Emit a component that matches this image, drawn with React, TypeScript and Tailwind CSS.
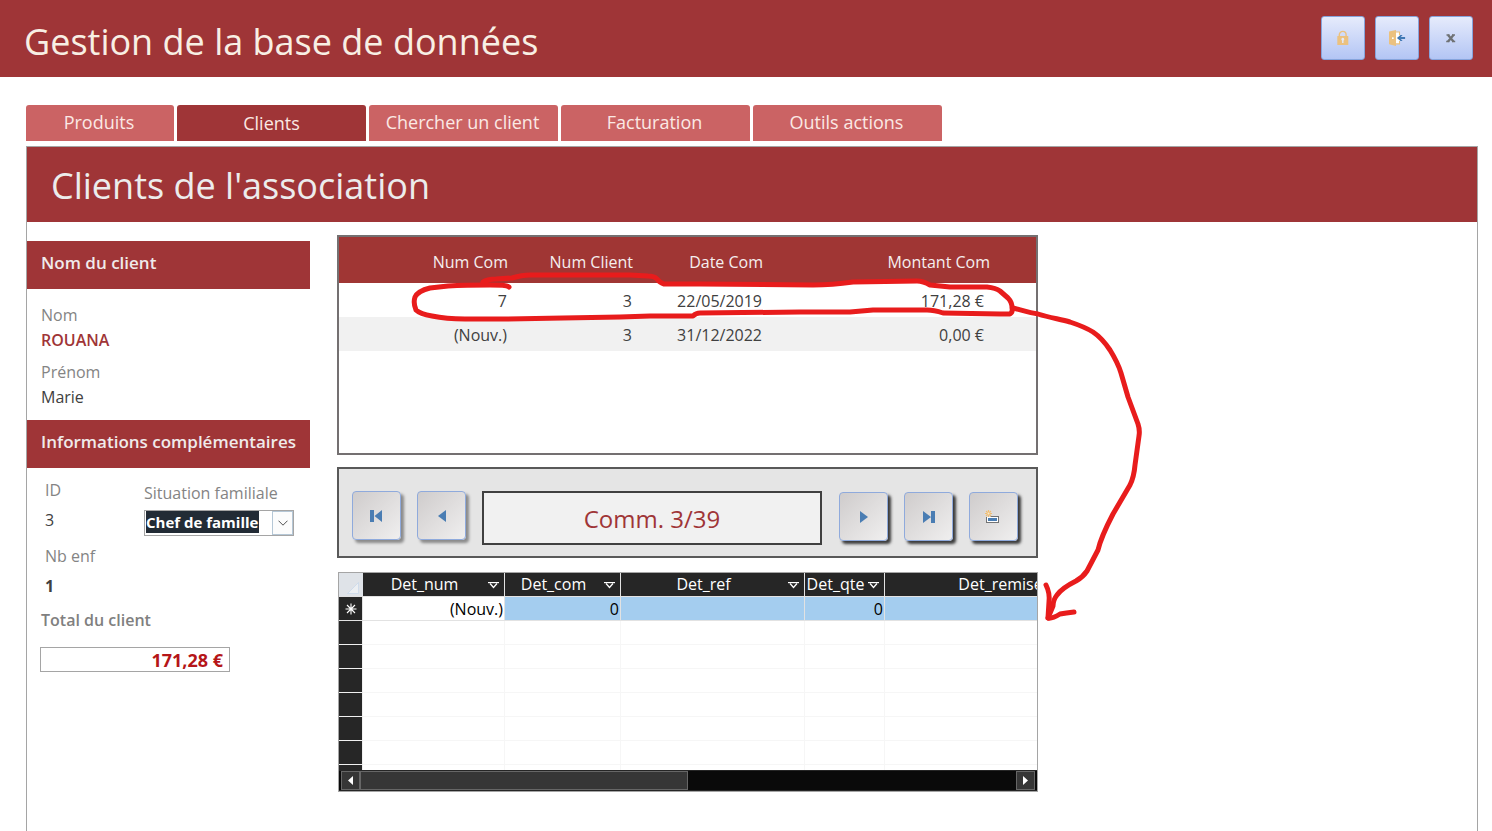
import React from "react";

const TABS = [
  { label: "Produits", active: false, width: "w-[148px]" },
  { label: "Clients", active: true, width: "w-[189px]" },
  { label: "Chercher un client", active: false, width: "w-[189px]" },
  { label: "Facturation", active: false, width: "w-[189px]" },
  { label: "Outils actions", active: false, width: "w-[189px]" },
];

const ORDERS = [
  { num: "7", client: "3", date: "22/05/2019", amount: "171,28 €" },
  { num: "(Nouv.)", client: "3", date: "31/12/2022", amount: "0,00 €" },
];

const DETAIL_COLUMNS = ["Det_num", "Det_com", "Det_ref", "Det_qte", "Det_remise"];

function LockIcon() {
  return (
    <svg width="12" height="16" viewBox="0 0 12 16" aria-hidden="true">
      <path d="M2.3 7V4.8a3.4 3.4 0 0 1 6.8 0V7" fill="none" stroke="#ebc17f" strokeWidth="1.4" />
      <rect x="0.3" y="6" width="11" height="9" rx="0.6" fill="#ebc17f" />
      <path d="M5.8 7.8a1.5 1.5 0 0 1 .7 2.8V13H5.1v-2.4a1.5 1.5 0 0 1 .7-2.8z" fill="#e4eafb" />
    </svg>
  );
}

function ExitIcon() {
  return (
    <svg width="17" height="16" viewBox="0 0 17 16" aria-hidden="true">
      <path d="M6.5 2H11v12H6.5z" fill="#fff" />
      <path d="M6.5 2h4v3.2M10.5 11v2.9h-4" fill="none" stroke="#ebc17f" strokeWidth="1.1" />
      <path d="M0 1.6L7 0.1v15.8L0 14.2z" fill="#ebc17f" />
      <rect x="3" y="7.2" width="1.7" height="1.7" rx="0.5" fill="#fff" />
      <path d="M7.9 8L11.5 4.9h2.1L11.8 7h4.3v2.1h-4.3l1.8 2h-2.1z" fill="#4179b4" />
    </svg>
  );
}

function CloseIcon() {
  return (
    <svg width="10" height="9" viewBox="0 0 10 9" aria-hidden="true">
      <path d="M0.5 1h3M6 1h3M0.2 7.5h3.2M6 7.5h3.2" stroke="#6f7275" strokeWidth="1.5" />
      <path d="M2 1l5.5 6.5M7.5 1L2 7.5" stroke="#6f7275" strokeWidth="2.3" />
    </svg>
  );
}

function FirstIcon() {
  return (
    <svg width="13" height="12" viewBox="0 0 13 12" aria-hidden="true">
      <path d="M0 0h4v12H0zM12 0v12L4.5 6z" fill="#4a7db3" />
    </svg>
  );
}

function PreviousIcon() {
  return (
    <svg width="8" height="12" viewBox="0 0 8 12" aria-hidden="true">
      <path d="M8 0v12L0 6z" fill="#4a7db3" />
    </svg>
  );
}

function NextIcon() {
  return (
    <svg width="8" height="12" viewBox="0 0 8 12" aria-hidden="true">
      <path d="M0 0v12l8-6z" fill="#4a7db3" />
    </svg>
  );
}

function LastIcon() {
  return (
    <svg width="12" height="12" viewBox="0 0 12 12" aria-hidden="true">
      <path d="M0 0v12l8-6zM8 0h4v12H8z" fill="#4a7db3" />
    </svg>
  );
}

function NewRecordIcon() {
  return (
    <svg className="mr-0.5" width="15" height="13" viewBox="0 0 15 13" aria-hidden="true">
      <rect x="1.5" y="6.5" width="12" height="6" fill="#fff" stroke="#737373" />
      <rect x="3" y="8" width="9" height="3" fill="#4a7db3" />
      <path d="M0 0h7v5.5L5 7H0z" fill="#dedbdb" />
      <path d="M3.5 0v7M0 3.5h7M1 1l5 5M6 1L1 6" stroke="#efbd72" strokeWidth="1.1" />
      <circle cx="3.5" cy="3.5" r="1.4" fill="#fbe9cb" stroke="#efbd72" strokeWidth="0.9" />
    </svg>
  );
}

function ColumnArrow() {
  return (
    <svg className="mt-0.5 shrink-0" width="11" height="7" viewBox="0 0 11 7" aria-hidden="true">
      <path d="M0 0.6h11" stroke="#fff" strokeWidth="1.2" />
      <path d="M2 1.5L5.5 5.5 9 1.5" fill="none" stroke="#fff" strokeWidth="1.2" />
    </svg>
  );
}

function HeaderButton({ label, children }: { label: string; children: React.ReactNode }) {
  return (
    <button
      type="button"
      aria-label={label}
      className="flex size-11 items-center justify-center rounded-[3px] border border-[#86a4dc] bg-linear-to-b from-[#e6ebfc] to-[#b3c5f4]"
    >
      {children}
    </button>
  );
}

function NavButton({ label, strong, children }: { label: string; strong?: boolean; children: React.ReactNode }) {
  return (
    <button
      type="button"
      aria-label={label}
      className={
        "flex size-[49px] shrink-0 items-center justify-center rounded-[4px] border border-[#8faadc] bg-linear-to-br from-[#cfcccc] to-[#f0efef] " +
        (strong ? "shadow-[3px_3px_3px_rgba(0,0,0,0.75)]" : "shadow-[3px_3px_3px_rgba(0,0,0,0.4)]")
      }
    >
      {children}
    </button>
  );
}

function SectionTitle({ children }: { children: React.ReactNode }) {
  return (
    <h3 className="flex h-12 items-center bg-[#9f3537] px-3.5 pb-1 text-[17px] font-semibold whitespace-nowrap text-[#f0eaea]">
      {children}
    </h3>
  );
}

function ClientSidebar() {
  return (
    <aside className="w-[283px] shrink-0 pt-[19px] text-base leading-6 text-[#404040]">
      <SectionTitle>Nom du client</SectionTitle>
      <div className="flex flex-col gap-2 px-3.5 pt-3.5 pb-[11px]">
        <div className="flex flex-col gap-px">
          <label htmlFor="nom" className="text-[#848484]">Nom</label>
          <input id="nom" defaultValue="ROUANA" className="h-6 w-full font-semibold text-[#9f3537]" />
        </div>
        <div className="flex flex-col gap-px">
          <label htmlFor="prenom" className="text-[#848484]">Prénom</label>
          <input id="prenom" defaultValue="Marie" className="h-6 w-full" />
        </div>
      </div>
      <SectionTitle>Informations complémentaires</SectionTitle>
      <div className="flex pt-2.5 pl-[18px]">
        <div className="flex w-[99px] flex-col gap-3">
          <div className="flex flex-col gap-1.5">
            <label htmlFor="client-id" className="text-[#848484]">ID</label>
            <input id="client-id" defaultValue="3" className="h-6 w-full" />
          </div>
          <div className="flex flex-col gap-1.5">
            <label htmlFor="enfants" className="text-[#848484]">Nb enf</label>
            <input id="enfants" defaultValue="1" className="h-6 w-full font-bold" />
          </div>
        </div>
        <div className="flex flex-col gap-[5px] pt-[3px]">
          <label htmlFor="situation" className="text-[#848484]">Situation familiale</label>
          <div className="flex h-[26px] w-[150px] justify-between border border-[#a5a5a5] bg-white">
            <select
              id="situation"
              className="ml-px h-[22px] w-[113px] appearance-none bg-[#222b35] text-[15px] leading-[22px] font-bold text-white"
            >
              <option>Chef de famille</option>
            </select>
            <button
              type="button"
              aria-label="Ouvrir la liste"
              className="flex w-[21px] items-center justify-center border border-[#b5c7d6] bg-[#fcfcfc]"
            >
              <svg width="10" height="6" viewBox="0 0 10 6" aria-hidden="true">
                <path d="M0.5 0.7L5 5.2l4.5-4.5" fill="none" stroke="#505050" />
              </svg>
            </button>
          </div>
        </div>
      </div>
      <div className="flex flex-col gap-[15px] px-[13px] pt-2.5">
        <label htmlFor="total" className="pl-px font-semibold text-[#808080]">Total du client</label>
        <input
          id="total"
          readOnly
          defaultValue="171,28 €"
          className="h-[25px] w-[190px] border border-[#a5a5a5] pr-1.5 text-right text-lg leading-[23px] font-bold text-[#b51518]"
        />
      </div>
    </aside>
  );
}

function OrdersTable() {
  return (
    <div className="h-[220px] overflow-hidden border-2 border-[#747071] bg-white">
      <table className="w-full table-fixed border-collapse text-right text-base text-[#404040]">
        <colgroup>
          <col className="w-[169px]" />
          <col className="w-[125px]" />
          <col className="w-[130px]" />
          <col />
          <col className="w-[46px]" />
        </colgroup>
        <thead>
          <tr className="h-[46px] bg-[#a03634] text-[#f5eeee]">
            <th className="pt-1 font-normal">Num Com</th>
            <th className="pt-1 font-normal">Num Client</th>
            <th className="pt-1 font-normal">Date Com</th>
            <th className="pt-1 font-normal">Montant Com</th>
            <td />
          </tr>
        </thead>
        <tbody>
          {ORDERS.map((order) => (
            <tr key={order.num} className="h-[34px] even:bg-[#f1f1f1]">
              <td className="pt-0.5 pr-px">{order.num}</td>
              <td className="pt-0.5 pr-px">{order.client}</td>
              <td className="pt-0.5 pr-px">{order.date}</td>
              <td className="pt-0.5 pr-1.5">{order.amount}</td>
              <td />
            </tr>
          ))}
        </tbody>
      </table>
    </div>
  );
}

function RecordNavigator() {
  return (
    <div className="mt-3 flex h-[91px] items-start border-2 border-[#595959] bg-[#e5e5e5] pt-[22px] pr-[18px] pl-[13px]">
      <div className="flex gap-4">
        <NavButton label="Premier"><FirstIcon /></NavButton>
        <NavButton label="Précédent"><PreviousIcon /></NavButton>
      </div>
      <output className="mr-[17px] ml-4 flex h-[54px] min-w-0 flex-1 items-center justify-center border-2 border-[#404040] bg-[#f1f1f1] pt-0.5 text-2xl text-[#9f3537]">
        Comm. 3/39
      </output>
      <div className="flex gap-4 pt-px">
        <NavButton label="Suivant" strong><NextIcon /></NavButton>
        <NavButton label="Dernier" strong><LastIcon /></NavButton>
        <NavButton label="Nouveau" strong><NewRecordIcon /></NavButton>
      </div>
    </div>
  );
}

function DetailSheet() {
  return (
    <div className="mt-3.5 ml-px flex h-[220px] flex-col border border-[#a5a5a5] bg-white">
      <div className="min-h-0 flex-1 overflow-hidden">
        <table className="w-[796px] table-fixed border-separate border-spacing-0 text-base leading-[22px] text-black">
          <colgroup>
            <col className="w-6" />
            <col className="w-[142px]" />
            <col className="w-[116px]" />
            <col className="w-[184px]" />
            <col className="w-20" />
            <col className="w-[250px]" />
          </colgroup>
          <thead>
            <tr className="h-6 bg-[#262626] text-white">
              <td className="border-b border-[#e2e2e2] bg-[#dfe3e8] p-0 align-bottom">
                <svg className="mr-1 mb-0.5 ml-auto" width="12" height="12" viewBox="0 0 12 12" aria-hidden="true">
                  <path d="M0.5 11.5L11.5 0.5v11z" fill="#eceff2" stroke="#c5d7ea" strokeWidth="0.7" />
                </svg>
              </td>
              {DETAIL_COLUMNS.map((name) => (
                <th key={name} className="border-r border-b border-[#e2e2e2] p-0 pb-px font-normal">
                  <div className="flex items-center gap-0.5 pr-[5px]">
                    <span className="min-w-0 flex-1 overflow-hidden">{name}</span>
                    <ColumnArrow />
                  </div>
                </th>
              ))}
            </tr>
          </thead>
          <tbody>
            <tr className="h-6 bg-[#a4cdef] text-right">
              <td className="border-r border-b border-[#e2e2e2] bg-[#262626] p-0">
                <svg className="mx-auto" width="12" height="12" viewBox="0 0 12 12" aria-hidden="true">
                  <path d="M6 0.5v11M0.5 6h11M2 2l8 8M10 2l-8 8" stroke="#fff" strokeWidth="1.1" />
                </svg>
              </td>
              <td className="border-r border-b border-[#e2e2e2] bg-white p-0 pr-px">(Nouv.)</td>
              <td className="border-r border-b border-[#e2e2e2] p-0 pr-px">0</td>
              <td className="border-r border-b border-[#e2e2e2] p-0" />
              <td className="border-r border-b border-[#e2e2e2] p-0 pr-px">0</td>
              <td className="border-b border-[#e2e2e2] p-0" />
            </tr>
            {[0, 1, 2, 3, 4, 5, 6].map((row) => (
              <tr key={row} className="h-6">
                <td className="border-r border-b border-[#f0f0f0] bg-[#262626] p-0" />
                {DETAIL_COLUMNS.map((name) => (
                  <td key={name} className="border-r border-b border-[#f6f6f6] p-0" />
                ))}
              </tr>
            ))}
          </tbody>
        </table>
      </div>
      <div className="flex h-[21px] shrink-0 border-y border-[#262626] bg-[#0a0a0a]">
        <button type="button" aria-label="Défiler à gauche" className="ml-0.5 flex w-[19px] items-center justify-center border border-[#666] bg-[#363636]">
          <svg width="5" height="9" viewBox="0 0 5 9" aria-hidden="true"><path d="M5 0v9L0 4.5z" fill="#fff" /></svg>
        </button>
        <div className="w-[328px] border border-[#666] bg-[#363636]" />
        <button type="button" aria-label="Défiler à droite" className="mr-0.5 ml-auto flex w-[19px] items-center justify-center border border-[#666] bg-[#363636]">
          <svg width="5" height="9" viewBox="0 0 5 9" aria-hidden="true"><path d="M0 0v9l5-4.5z" fill="#fff" /></svg>
        </button>
      </div>
    </div>
  );
}

function InkAnnotation() {
  return (
    <svg
      className="pointer-events-none absolute top-0 left-0"
      width="820"
      height="400"
      viewBox="337 235 820 400"
      fill="none"
      stroke="#e81c1c"
      strokeWidth="5"
      strokeLinecap="round"
      strokeLinejoin="round"
      aria-hidden="true"
    >
      <path d="M509 287C507 285 500 285 490 285Q465 285 448 286L430 288Q418 291 415 297Q413 303 416 310Q420 314 432 316Q446 319 465 319H507L563 318L620 317L650 316H693Q696 313 700 313L800 312L850 312L873 310H927Q934 310 943 313L1000 314H1010Q1013 312 1012 308Q1012 302 1008 298L1000 291Q996 288 987 287L950 287L930 285Q923 281 917 281L853 282Q832 285 813 285L700 284H664Q660 283 657 279Q654 276 648 276L630 275H530Q522 275 512 278L496 279Q487 279 483 282" />
      <path d="M1013 308C1021 310 1030 313 1038 314C1050 318 1060 319 1070 322Q1085 327 1093 332Q1102 338 1110 350Q1118 363 1121 373L1128 397L1138 424Q1140 430 1139 436L1135 465Q1134 477 1130 485L1113 514Q1101 537 1098 550L1087 571Q1083 577 1076 581Q1062 588 1057 595Q1053 600 1053 606L1048 618" />
      <path d="M1046 585Q1050 593 1049 602L1048 618Q1052 619 1060 614Q1066 613 1074 612" />
    </svg>
  );
}

export default function App() {
  return (
    <div className="flex min-h-screen flex-col bg-white font-['Open_Sans','Noto_Sans',sans-serif]">
      <header className="flex h-[77px] shrink-0 items-center justify-between bg-[#9f3537] pr-[19px] pb-px pl-6">
        <h1 className="pt-2 text-4xl font-normal text-[#f8efe4]">Gestion de la base de données</h1>
        <div className="flex gap-2.5">
          <HeaderButton label="Verrouiller"><LockIcon /></HeaderButton>
          <HeaderButton label="Quitter"><ExitIcon /></HeaderButton>
          <HeaderButton label="Fermer"><CloseIcon /></HeaderButton>
        </div>
      </header>

      <nav className="mt-7 flex gap-[3px] px-[26px]">
        {TABS.map((tab) => (
          <button
            key={tab.label}
            type="button"
            aria-current={tab.active ? "page" : undefined}
            className={
              "h-9 rounded-t-[3px] text-lg text-[#fbe9e4] " +
              tab.width +
              (tab.active ? " bg-[#9f3537]" : " bg-[#cb6364] pr-0.5 pb-0.5")
            }
          >
            {tab.label}
          </button>
        ))}
      </nav>

      <main className="mt-[5px] mr-3.5 ml-[26px] flex flex-1 flex-col border border-b-0 border-[#a5a5a5]">
        <h2 className="flex h-[75px] items-center bg-[#9f3537] px-6 pt-0.5 text-4xl font-normal text-[#ececec]">
          Clients de l&apos;association
        </h2>
        <div className="flex flex-1">
          <ClientSidebar />
          <section className="relative mt-[13px] ml-[27px] w-full max-w-[701px]">
            <OrdersTable />
            <RecordNavigator />
            <DetailSheet />
            <InkAnnotation />
          </section>
        </div>
      </main>
    </div>
  );
}
